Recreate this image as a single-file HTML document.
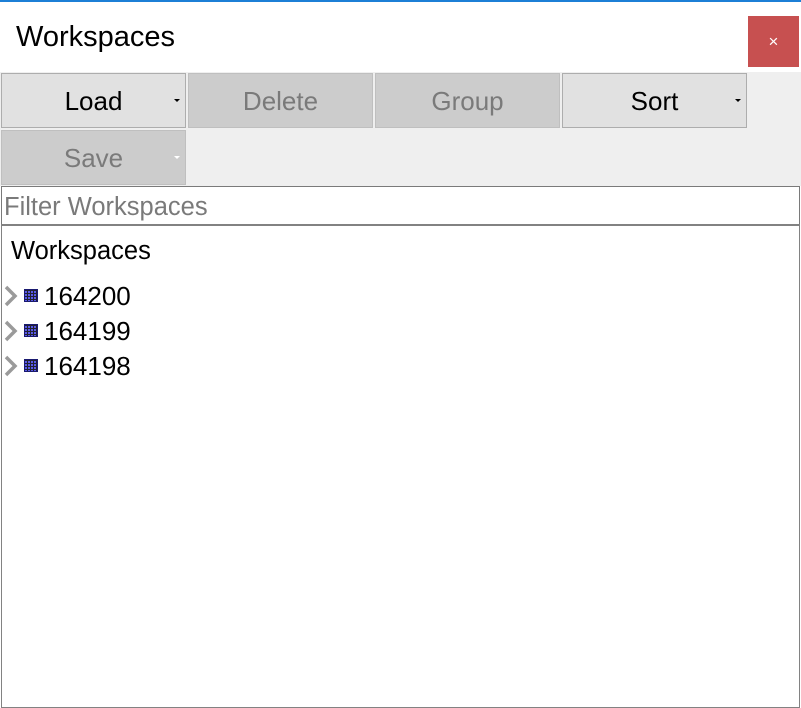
<!DOCTYPE html>
<html><head><style>
body{margin:0;width:801px;height:708px;background:#fff;font-family:"Liberation Sans",sans-serif;position:relative;overflow:hidden}
div{position:absolute;box-sizing:border-box}
.btn{height:55px;width:185px;border:1px solid #adadad;background:#e1e1e1;font-size:26px;text-align:center;line-height:55px;color:#000}
.dis{background:#cccccc;border-color:#bfbfbf;color:#7a7a7a}
.arr{position:absolute;right:5px;top:25px;width:0;height:0;border-left:3px solid transparent;border-right:3px solid transparent;border-top:3px solid #000}
.item{left:4px;font-size:26px;height:35px;line-height:35px}
.chev{position:absolute;left:0;top:6px}
.ic{position:absolute;left:20px;top:10px;width:12px;height:11px;background:#5a5ae8;border:1px solid #1a1a70;background-image:linear-gradient(90deg,transparent 2px,#223 2px,#223 3px,transparent 3px),linear-gradient(0deg,transparent 2px,#223 2px,#223 3px,transparent 3px);background-size:3px 3px}
</style></head><body>
<div style="left:0;top:0;width:801px;height:2px;background:#1c7fd6"></div>
<div style="left:16px;top:21px;font-size:29px;color:#000">Workspaces</div>
<div style="left:748px;top:16px;width:51px;height:51px;background:#c75050;color:#fff;font-size:17px;text-align:center;line-height:51px">×</div>
<div style="left:0;top:72px;width:801px;height:114px;background:#efefef"></div>
<div class="btn" style="left:1px;top:73px">Load<span class="arr"></span></div>
<div class="btn dis" style="left:188px;top:73px">Delete</div>
<div class="btn dis" style="left:375px;top:73px">Group</div>
<div class="btn" style="left:562px;top:73px">Sort<span class="arr"></span></div>
<div class="btn dis" style="left:1px;top:130px">Save<span class="arr" style="border-top-color:#fff"></span></div>
<div style="left:1px;top:186px;width:799px;height:39px;border:1px solid #7a7a7a;background:#fff;font-size:25.5px;color:#7a7a7a;line-height:40px;padding-left:2px">Filter Workspaces</div>
<div style="left:1px;top:224px;width:799px;height:484px;border:1px solid #828282;border-top:2px solid #828282;background:#fff"></div>
<div style="left:11px;top:237px;font-size:25.5px">Workspaces</div>
<div class="item" style="top:279px;width:200px"><svg class="chev" width="16" height="22" viewBox="0 0 16 22"><path d="M2 2 L11 11 L2 20" fill="none" stroke="#9a9a9a" stroke-width="3.5"/></svg><span class="ic"></span><span style="position:absolute;left:40px">164200</span></div>
<div class="item" style="top:314px;width:200px"><svg class="chev" width="16" height="22" viewBox="0 0 16 22"><path d="M2 2 L11 11 L2 20" fill="none" stroke="#9a9a9a" stroke-width="3.5"/></svg><span class="ic"></span><span style="position:absolute;left:40px">164199</span></div>
<div class="item" style="top:349px;width:200px"><svg class="chev" width="16" height="22" viewBox="0 0 16 22"><path d="M2 2 L11 11 L2 20" fill="none" stroke="#9a9a9a" stroke-width="3.5"/></svg><span class="ic"></span><span style="position:absolute;left:40px">164198</span></div>
</body></html>
